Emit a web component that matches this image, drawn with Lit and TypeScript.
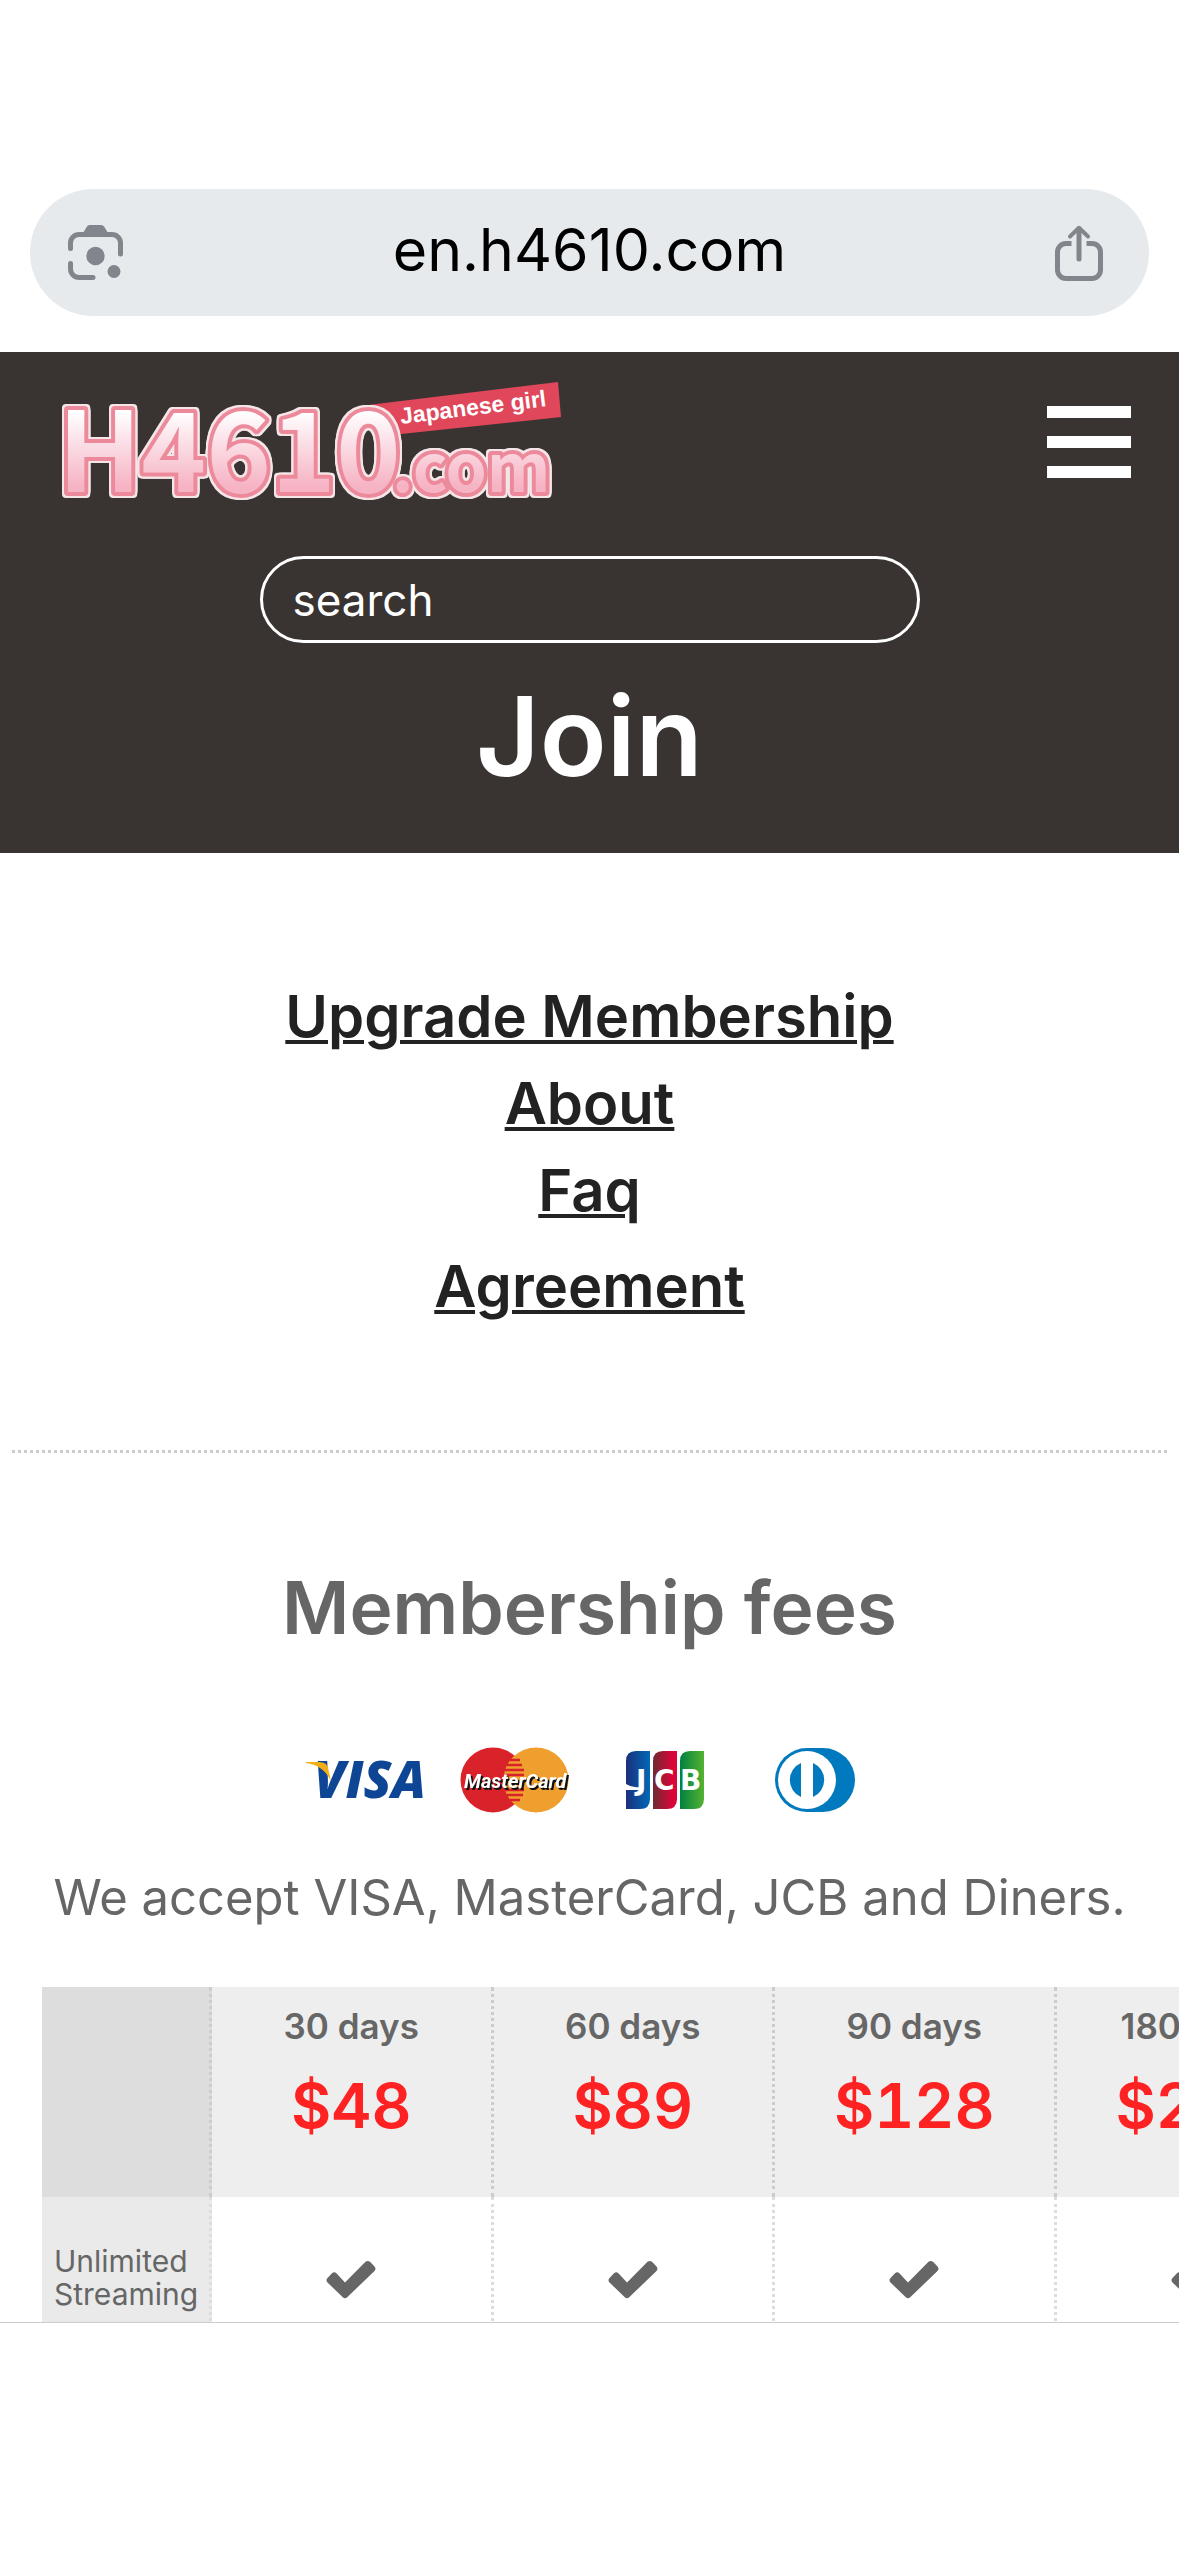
import { LitElement, css, html } from "lit";
import { customElement, property } from "lit/decorators.js";

interface Plan {
  period: string;
  price: string;
}

const LINKS = ["Upgrade Membership", "About", "Faq", "Agreement"];

const PLANS: Plan[] = [
  { period: "30 days", price: "$48" },
  { period: "60 days", price: "$89" },
  { period: "90 days", price: "$128" },
  { period: "180 days", price: "$248" },
];

const cameraIcon = html`<svg width="56" height="56" viewBox="0 0 56 56" aria-hidden="true">
  <g fill="none" stroke="#80868b" stroke-width="5" stroke-linecap="round">
    <path d="M2.5 23.5V18a8.5 8.5 0 0 1 8.5-8.5H44a8.5 8.5 0 0 1 8.5 8.5V29" />
    <path d="M2.5 38.5V44a8.5 8.5 0 0 0 8.5 8.5H25" />
  </g>
  <g fill="#80868b">
    <path d="M15 8l4-6.5Q20 0 21.5 0h12Q35 0 36 1.5L40 8z" />
    <circle cx="27.5" cy="31" r="9.2" />
    <circle cx="46" cy="46.5" r="6.5" />
  </g>
</svg>`;

const shareIcon = html`<svg width="48" height="56" viewBox="0 0 48 56" aria-hidden="true">
  <g fill="none" stroke="#80868b" stroke-width="5">
    <path d="M16.5 18.5H11a8.5 8.5 0 0 0-8.5 8.5V45a8.5 8.5 0 0 0 8.5 8.5H37a8.5 8.5 0 0 0 8.5-8.5V27a8.5 8.5 0 0 0-8.5-8.5H31.5" />
    <path d="M24 34V4" stroke-linecap="round" />
    <path d="M15 11.5L24 2.8L33 11.5" stroke-width="4" stroke-linecap="round" stroke-linejoin="round" />
  </g>
</svg>`;

const logo = html`<svg width="504" height="120" viewBox="0 0 504 120" role="img" aria-label="H4610.com">
  <defs>
    <linearGradient id="pink" gradientUnits="userSpaceOnUse" x1="0" y1="20" x2="0" y2="114">
      <stop offset="0.1" stop-color="#fff" />
      <stop offset="0.9" stop-color="#f6b3c4" />
    </linearGradient>
  </defs>
  <path d="M300 24L498 0L501 35L322 54z" fill="#e0475b" />
  <g class="wordmark" fill="url(#pink)" stroke="#ec8a9b" stroke-width="8" stroke-linejoin="round">
    <text x="-2" y="110" font-size="110">H4610</text>
    <text x="332" y="110" font-size="66">.com</text>
  </g>
  <text class="tagline" x="341" y="42" font-size="23" fill="#fff" transform="rotate(-7 341 42)">Japanese girl</text>
</svg>`;

const visaLogo = html`<svg width="120" height="66" viewBox="0 0 120 66" role="img" aria-label="VISA">
  <text class="visa" x="9" y="51" font-size="51" fill="#0e4595">VISA</text>
  <path d="M1 15H14Q22 15 23 21L26 34Q18 18 1 16z" fill="#f2ae14" />
</svg>`;

const masterCardLogo = html`<svg width="110" height="66" viewBox="0 0 110 66" role="img" aria-label="MasterCard">
  <circle cx="33" cy="33" r="32.5" fill="#d9222a" />
  <circle cx="76" cy="33" r="32.5" fill="#ee9f2d" />
  <path
    d="M50 13H60M47 18H62M45 23H64M44 28H64M45 43H64M47 48H63M50 53H60"
    stroke="#d9222a"
    stroke-width="2.5"
  />
  <text class="mastercard" x="4" y="41" font-size="20" fill="#fff">MasterCard</text>
</svg>`;

const jcbLogo = html`<svg width="78" height="66" viewBox="0 0 78 66" role="img" aria-label="JCB">
  <defs>
    <linearGradient id="blue"><stop stop-color="#1c2f7c" /><stop offset="1" stop-color="#0069b7" /></linearGradient>
    <linearGradient id="red"><stop stop-color="#6d2a31" /><stop offset=".8" stop-color="#d9063a" /></linearGradient>
    <linearGradient id="green"><stop stop-color="#008140" /><stop offset="1" stop-color="#55b331" /></linearGradient>
  </defs>
  <path d="M0 14Q0 4 10 4H24V52Q24 62 14 62H0z" fill="url(#blue)" />
  <path d="M27 14Q27 4 37 4H51V52Q51 62 41 62H27z" fill="url(#red)" />
  <path d="M54 14Q54 4 64 4H78V52Q78 62 68 62H54z" fill="url(#green)" />
  <path d="M0 37Q6 41 13 40V43H0z" fill="#fff" />
  <g class="jcb" font-size="28" fill="#fff">
    <text x="10" y="43">J</text>
    <text x="28" y="43">C</text>
    <text x="54" y="43">B</text>
  </g>
</svg>`;

const dinersLogo = html`<svg width="80" height="66" viewBox="0 0 80 66" role="img" aria-label="Diners">
  <path d="M32 1H48A32 32 0 0 1 48 65H32A32 32 0 0 1 32 1z" fill="#0079be" />
  <circle cx="32" cy="33" r="29" fill="#fff" />
  <path d="M26 16A18.5 18.5 0 0 0 26 50zM38 16A18.5 18.5 0 0 1 38 50z" fill="#0079be" />
</svg>`;

const checkIcon = html`<svg width="50" height="40" viewBox="0 0 50 40" role="img" aria-label="Included">
  <path
    d="M1.5 18L6 13.2Q8.2 11.2 10.4 13.2L19 22.5L39.5 1.8Q41.8 0 44 1.8L48.5 6.5Q50.5 8.8 48.5 11L21.2 37.3Q19 39.2 16.8 37.3L1.5 22.5Q-.5 20.2 1.5 18z"
    fill="#666"
  />
</svg>`;

/** Fees per period; wider than the screen, cut off at the right edge. */
@customElement("plan-table")
export class PlanTable extends LitElement {
  @property({ attribute: false }) plans: Plan[] = [];

  static styles = css`
    :host {
      display: block;
      overflow: hidden;
    }
    table {
      table-layout: fixed;
      width: 1296px;
      border-collapse: separate;
      border-spacing: 0;
    }
    .feature-col {
      width: 170px;
    }
    th,
    td {
      box-sizing: border-box;
      padding: 0;
      border-right: 3px dotted #ddd;
      text-align: center;
    }
    thead th,
    thead td {
      height: 210px;
      border-right-color: #ccc;
      background: #eee;
      vertical-align: top;
    }
    thead td {
      background: #ddd;
    }
    .period,
    .price {
      display: block;
      font-weight: 600;
    }
    .period {
      padding-top: 17px;
      font-size: 35px;
      line-height: 44px;
    }
    .price {
      padding-top: 20px;
      color: #f22;
      font-size: 62px;
      font-variant-numeric: tabular-nums;
      line-height: 76px;
    }
    tbody th,
    tbody td {
      height: 166px;
    }
    tbody th {
      padding: 0 0 4px 12px;
      background: #eaeaea;
      font-size: 30px;
      font-weight: 400;
      line-height: 33px;
      text-align: left;
    }
    svg {
      display: block;
      margin: 0 auto;
    }
  `;

  render() {
    return html`<table>
      <colgroup>
        <col class="feature-col" />
        ${this.plans.map(() => html`<col />`)}
      </colgroup>
      <thead>
        <tr>
          <td></td>
          ${this.plans.map(
            (p) => html`<th scope="col">
              <span class="period">${p.period}</span>
              <span class="price">${p.price}</span>
            </th>`
          )}
        </tr>
      </thead>
      <tbody>
        <tr>
          <th scope="row">Unlimited Streaming</th>
          ${this.plans.map(() => html`<td>${checkIcon}</td>`)}
        </tr>
      </tbody>
    </table>`;
  }
}

@customElement("app-root")
export class AppRoot extends LitElement {
  static styles = css`
    :host {
      display: flex;
      flex-direction: column;
      height: 100vh;
      background: #fff;
      color: #666;
      font-family: Inter, "Liberation Sans", sans-serif;
    }
    svg {
      display: block;
      overflow: visible;
    }
    button {
      padding: 0;
      border: none;
      background: transparent;
      cursor: pointer;
    }
    .browser-bar {
      padding: 189px 30px 36px;
    }
    .address {
      display: flex;
      align-items: center;
      justify-content: space-between;
      height: 127px;
      padding: 0 46px 0 38px;
      border-radius: 64px;
      background: #e6eaed;
      color: #000;
      font-size: 59px;
    }
    .address span {
      padding-bottom: 6px;
    }
    .page {
      flex: 1;
      min-height: 0;
      overflow: hidden;
    }
    header {
      padding: 30px 48px 54px;
      background: #393331;
      color: #fff;
    }
    .top {
      display: flex;
      align-items: flex-start;
      justify-content: space-between;
      padding-left: 12px;
    }
    .menu {
      display: flex;
      flex-direction: column;
      gap: 18px;
      padding-top: 24px;
    }
    .menu span {
      width: 84px;
      height: 12px;
      background: #fff;
    }
    .search {
      display: block;
      box-sizing: border-box;
      width: 660px;
      height: 87px;
      margin: 54px auto 0;
      padding: 0 30px;
      border: 3px solid #fff;
      border-radius: 45px;
      background: transparent;
      color: #fff;
      font: inherit;
      font-size: 44px;
    }
    .search::placeholder {
      color: #fff;
      opacity: 1;
    }
    h1,
    h2,
    p {
      margin: 0;
      text-align: center;
    }
    h1 {
      padding-top: 30px;
      font-size: 110px;
      font-weight: 600;
      line-height: 126px;
    }
    .links {
      display: flex;
      flex-direction: column;
      align-items: center;
      margin: 0 12px;
      padding: 120px 0;
      border-bottom: 3px dotted #ccc;
    }
    .links a {
      color: #222;
      font-size: 58px;
      font-weight: 600;
      line-height: 87px;
      text-decoration-thickness: 4px;
      text-underline-offset: 3px;
    }
    .links a:last-child {
      padding-top: 9px;
    }
    h2 {
      padding-top: 107px;
      font-size: 73px;
      font-weight: 600;
      line-height: 96px;
    }
    .cards {
      display: flex;
      justify-content: center;
      gap: 30px;
      padding: 91px 0 51px;
    }
    .cards span {
      display: flex;
      justify-content: center;
      width: 120px;
    }
    p {
      font-size: 49px;
      line-height: 68px;
    }
    plan-table {
      margin: 55px 0 0 42px;
    }
    .toolbar {
      flex: none;
      height: 233px;
      border-top: 1px solid #ccc;
    }
    .wordmark {
      filter: drop-shadow(2px 0 0 #f4e6e8) drop-shadow(-2px 0 0 #f4e6e8) drop-shadow(0 2px 0 #f4e6e8)
        drop-shadow(0 -2px 0 #f4e6e8);
      font-family: "Noto Sans CJK JP", sans-serif;
      font-weight: 700;
      paint-order: stroke;
    }
    .tagline {
      font-family: "Liberation Sans", sans-serif;
      font-weight: 700;
    }
    .visa {
      font-family: "Open Sans", sans-serif;
      font-style: italic;
      font-weight: 800;
    }
    .mastercard {
      filter: drop-shadow(2px 2px 0 #111);
      font-family: Roboto, sans-serif;
      font-style: italic;
      font-weight: 700;
    }
    .jcb {
      font-family: "DejaVu Sans", sans-serif;
      font-weight: 700;
    }
  `;

  render() {
    return html`
      <div class="browser-bar">
        <div class="address">
          <button aria-label="Search with camera">${cameraIcon}</button>
          <span>en.h4610.com</span>
          <button aria-label="Share">${shareIcon}</button>
        </div>
      </div>
      <div class="page">
        <header>
          <div class="top">
            <a href="#" aria-label="Home">${logo}</a>
            <button class="menu" aria-label="Menu"><span></span><span></span><span></span></button>
          </div>
          <input class="search" type="text" placeholder="search" aria-label="search" />
          <h1>Join</h1>
        </header>
        <nav class="links">${LINKS.map((l) => html`<a href="#">${l}</a>`)}</nav>
        <main>
          <h2>Membership fees</h2>
          <div class="cards">
            <span>${visaLogo}</span>
            <span>${masterCardLogo}</span>
            <span>${jcbLogo}</span>
            <span>${dinersLogo}</span>
          </div>
          <p>We accept VISA, MasterCard, JCB and Diners.</p>
          <plan-table .plans=${PLANS}></plan-table>
        </main>
      </div>
      <div class="toolbar"></div>
    `;
  }
}
